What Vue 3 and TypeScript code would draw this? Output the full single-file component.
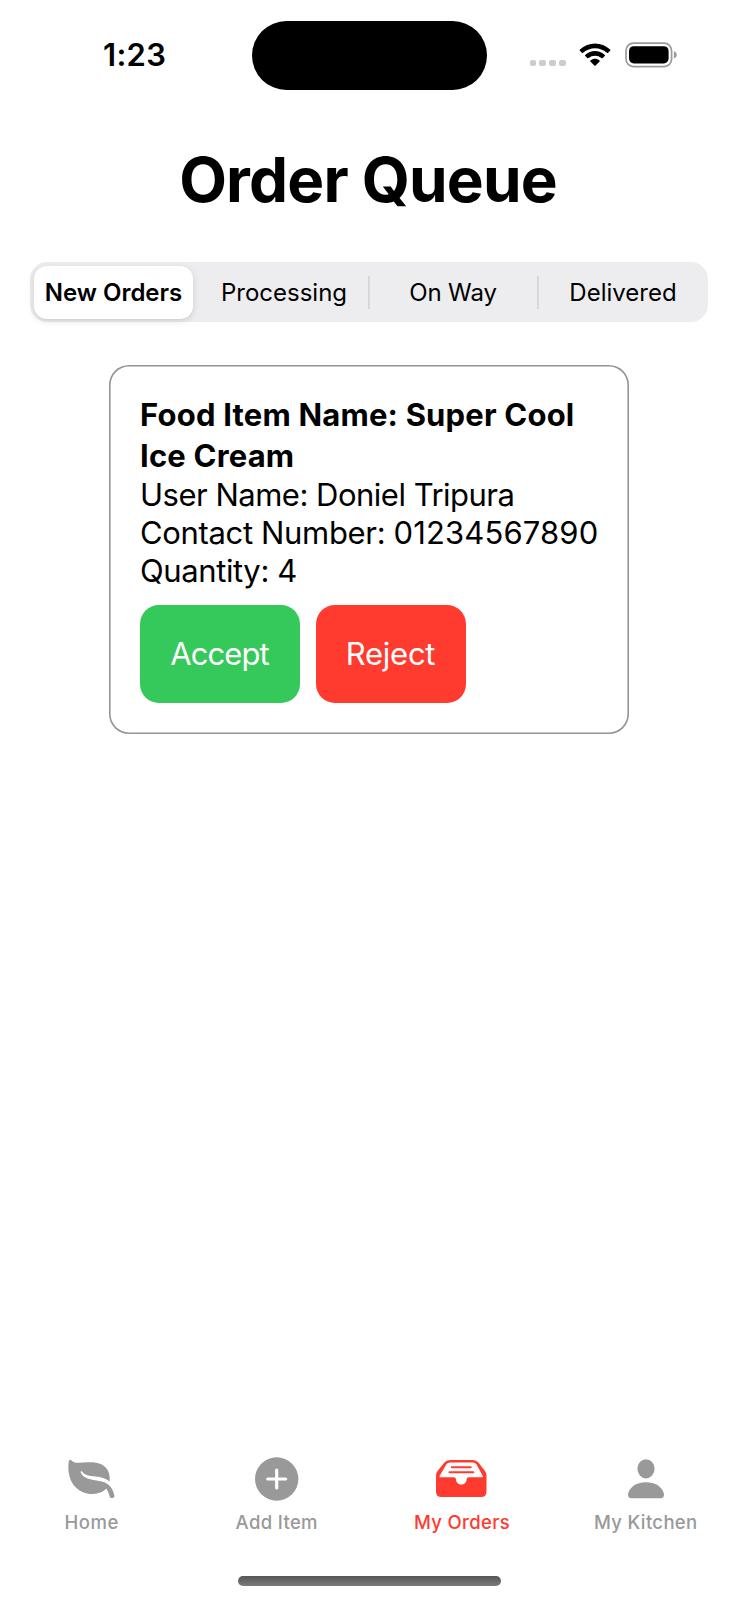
<script setup lang="ts">
import { ref } from 'vue'

interface Detail { id: string; label: string; value: string }
interface Tab { id: string; label: string }

const segments: string[] = ['New Orders', 'Processing', 'On Way', 'Delivered']
const details: Detail[] = [
  { id: 'user', label: 'User Name:', value: 'Doniel Tripura' },
  { id: 'contact', label: 'Contact Number:', value: '01234567890' },
  { id: 'quantity', label: 'Quantity:', value: '4' },
]
const tabs: Tab[] = [
  { id: 'home', label: 'Home' },
  { id: 'add', label: 'Add Item' },
  { id: 'orders', label: 'My Orders' },
  { id: 'kitchen', label: 'My Kitchen' },
]
const selected = ref(0)
const activeTab = ref('orders')
</script>

<template>
  <main class="screen">
    <header class="status">
      <div class="time">1:23</div>
      <div class="island"></div>
      <div class="indicators">
        <span class="signal"><i v-for="n in 4" :key="n"></i></span>
        <svg class="wifi" width="32" height="24" viewBox="0 0 32 24">
          <path d="M.9 6.6C9.4-1.4 22.6-1.4 31.1 6.6Q31.6 7.2 31.1 7.7L29.1 9.7Q28.5 10.2 27.9 9.7C21.2 3.6 10.8 3.6 4.1 9.7Q3.5 10.2 2.9 9.7L.9 7.7Q.4 7.2.9 6.6Z" />
          <path d="M6.2 12C11.8 6.8 20.2 6.8 25.8 12Q26.3 12.6 25.8 13.1L23.7 15.1Q23.1 15.6 22.5 15.1C18.8 11.8 13.2 11.8 9.5 15.1Q8.9 15.6 8.3 15.1L6.2 13.1Q5.7 12.6 6.2 12Z" />
          <path d="M11.5 17.4C14 15.2 18 15.2 20.5 17.4Q21.1 18 20.6 18.5L16.6 22.6Q16 23.2 15.4 22.6L11.4 18.5Q10.9 18 11.5 17.4Z" />
        </svg>
        <svg class="battery" width="53" height="26" viewBox="0 0 53 26">
          <rect x="1" y="1.2" width="45.6" height="23.4" rx="7.5" fill="none" stroke="#999" stroke-width="1.7" />
          <rect x="4" y="4.2" width="39.6" height="17.2" rx="4.8" fill="#000" />
          <path d="M48.9 9.3C52.7 10.4 52.7 15.4 48.9 16.5Z" fill="#999" />
        </svg>
      </div>
    </header>

    <h1>Order Queue</h1>

    <nav class="segmented">
      <button
        v-for="(s, i) in segments"
        :key="s"
        :class="['segment', { selected: selected === i, divided: i > 1 }]"
        @click="selected = i"
      >{{ s }}</button>
    </nav>

    <section class="card">
      <h2>Food Item Name: Super Cool Ice Cream</h2>
      <p v-for="d in details" :key="d.id" :class="d.id">{{ d.label }} <span>{{ d.value }}</span></p>
      <div class="actions">
        <button class="accept">Accept</button>
        <button class="reject">Reject</button>
      </div>
    </section>

    <footer class="tabbar">
      <button v-for="t in tabs" :key="t.id" :class="['tab', t.id, { active: activeTab === t.id }]" @click="activeTab = t.id">
        <svg v-if="t.id === 'home'" width="60" height="48" viewBox="2.6 0.4 60 48">
          <path d="M9.5 5.5C9.9 4 11 3.7 12.2 4.8C15.5 8.4 21.5 7 28 6.7C37 6.2 44.5 7.8 48.2 14.5C50.2 18.2 50.5 22 50.3 25.8C46.5 23 41.5 21.4 36 20.9C30 20.4 25.7 19.6 22.8 16.1C22 15.1 20.8 15.8 21.3 17C24 22.5 29 23.8 35.5 24.6C43.5 25.6 48.5 27.2 52 32.3C53.6 34.8 54.7 38 55 40.3C55.1 42.5 52.2 43.1 50.7 41.8C49.6 39 48.7 35.7 46.8 33C43.5 36.8 37.5 39 30.5 38.3C19.8 37.2 12.2 30.5 9.8 19.5C8.7 14.5 8.7 9 9.5 5.5Z" />
        </svg>
        <svg v-else-if="t.id === 'add'" width="60" height="48" viewBox="0 0 60 48">
          <circle cx="29.7" cy="23" r="21.7" />
          <path d="M29.7 14V32M20.7 23H38.7" fill="none" stroke="#fff" stroke-width="3.2" stroke-linecap="round" />
        </svg>
        <svg v-else-if="t.id === 'orders'" width="60" height="48" viewBox="-0.5 0 60 48">
          <path fill-rule="evenodd" d="M18.5 4H41.5Q44.7 4 46.8 6.5L53.3 14.8Q55 17 55 19.6V35.5Q55 41 49.5 41H10Q4.5 41 4.5 35.5V19.6Q4.5 17 6.2 14.8L12.9 6.5Q15 4 18.5 4ZM18.7 6.5Q16.3 6.5 14.9 8.3L8.1 20Q7.7 21.2 9 21.2H22.3Q24.5 21.2 24.5 23.5C24.8 30.2 34.8 30.2 35.1 23.5Q35.1 21.2 37.3 21.2H50.5Q51.8 21.2 51.3 20L44.9 8.3Q43.6 6.5 41.3 6.5Z" />
          <path d="M20.4 11.2H39.2M18 16.2H41.8" fill="none" stroke="currentColor" stroke-width="2.1" stroke-linecap="round" />
        </svg>
        <svg v-else width="60" height="48" viewBox="0 0 60 48">
          <ellipse cx="30" cy="12.8" rx="8.6" ry="9.6" />
          <path d="M15.2 42.2Q12 42.2 12 38.6C12.8 31.6 20 26.2 30 26.2S47.2 31.6 48 38.6Q48 42.2 44.8 42.2Z" />
        </svg>
        <span>{{ t.label }}</span>
      </button>
    </footer>
    <div class="home-indicator"></div>
  </main>
</template>

<style>
body { margin: 0; background: #fff; }
</style>

<style scoped>
.screen {
  width: 738px;
  height: 1600px;
  box-sizing: border-box;
  display: flex;
  flex-direction: column;
  align-items: center;
  overflow: hidden;
  background: #fff;
  color: #000;
  font-family: Inter, "Liberation Sans", sans-serif;
}
button { border: 0; margin: 0; padding: 0; background: none; font: inherit; color: inherit; }
svg { display: block; fill: currentColor; flex: none; }

.status {
  width: 738px;
  height: 110px;
  display: grid;
  grid-template-columns: 251.5px 235px 251.5px;
  align-items: center;
}
.time { padding-left: 103px; font-size: 31px; line-height: 38px; font-weight: 600; letter-spacing: 0.3px; }
.island { height: 69px; border-radius: 35px; background: #000; margin-top: 1px; }
.indicators { display: flex; align-items: center; padding-left: 43px; }
.signal { display: flex; gap: 3.6px; margin: 16px 13.5px 0 0; }
.signal i { width: 6.4px; height: 6.4px; border-radius: 2px; background: #ccc; }
.battery { margin-left: 13.5px; }

h1 { margin: 32px 0 0; padding-right: 2px; font-size: 62px; line-height: 76px; font-weight: 700; letter-spacing: -0.82px; }

.segmented {
  width: 678px;
  height: 60px;
  box-sizing: border-box;
  margin-top: 44px;
  padding: 4px;
  display: grid;
  grid-template-columns: 159px 173px 169px 169px;
  background: #ededef;
  border-radius: 17px;
}
.segment { box-sizing: border-box; display: flex; align-items: center; justify-content: center; font-size: 24px; white-space: nowrap; }
.segment:nth-child(2) { padding-left: 9px; }
.segment:nth-child(3) { padding-left: 5px; letter-spacing: -0.1px; }
.segment:nth-child(4) { padding-left: 7px; }
.segment.selected {
  height: 52.5px;
  background: #fff;
  border-radius: 13px;
  font-weight: 600;
  box-shadow: 0 2px 7px rgba(0, 0, 0, 0.13), 0 1px 1px rgba(0, 0, 0, 0.03);
}
.segment.divided {
  background: linear-gradient(#d5d5d8, #d5d5d8) left 1.5px center / 1.8px 33px no-repeat;
}

.card {
  width: 520px;
  height: 369px;
  box-sizing: border-box;
  margin-top: 42.5px;
  padding: 29px 0 0 31px;
  box-shadow: inset 0 0 0 1.6px #949497;
  border-radius: 20px;
}
h2 { width: 470px; margin: 0 0 -1px; font-size: 31px; line-height: 41.5px; font-weight: 700; letter-spacing: 0.19px; }
p { margin: 0; font-size: 31px; line-height: 38.3px; font-weight: 400; letter-spacing: -0.5px; white-space: nowrap; }
.contact { letter-spacing: -0.34px; }
.contact span { letter-spacing: 0.12px; }
.quantity { letter-spacing: -0.4px; }
.actions { display: flex; gap: 15.5px; margin-top: 14.5px; }
.actions button { height: 98px; border-radius: 19px; color: #fff; font-size: 31px; font-weight: 400; }
.actions .accept { width: 160px; padding-right: 1px; background: #35c85a; letter-spacing: -0.95px; }
.actions .reject { width: 150px; background: #ff3b30; letter-spacing: -0.25px; }

.tabbar { width: 738px; margin-top: auto; display: grid; grid-template-columns: repeat(4, 1fr); color: #999; }
.tab { display: flex; flex-direction: column; align-items: center; font-size: 18.5px; line-height: 24px; font-weight: 500; letter-spacing: 0.35px; }
.tab span { margin-top: 6px; }
.tab.home { letter-spacing: 0.6px; }
.tab.home span { margin-right: 1px; }
.tab.orders span { margin-left: 1.5px; }
.tab.active { color: #ff3b30; }

.home-indicator {
  width: 263px;
  height: 10px;
  margin: 42px 0 14px;
  border-radius: 5px;
  background: linear-gradient(#555, #7c7c7c);
}
</style>
